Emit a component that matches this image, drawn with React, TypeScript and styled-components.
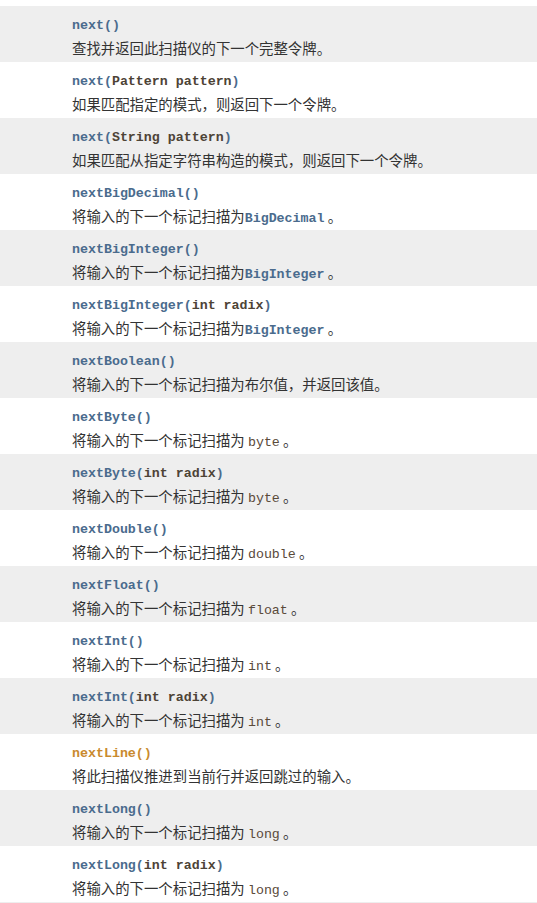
import * as React from 'react';
import styled, { createGlobalStyle } from 'styled-components';

const GlobalStyle = createGlobalStyle`
  html, body { margin: 0; padding: 0; background: #fff; }
`;

interface method {
  name: string,
  params?: string,
  desc: string,
  code?: string,
  link?: boolean,
  tail?: string,
  visited?: boolean,
}

const methods: method[] = [
  { name: 'next', desc: '查找并返回此扫描仪的下一个完整令牌。' },
  { name: 'next', params: 'Pattern pattern', desc: '如果匹配指定的模式，则返回下一个令牌。' },
  { name: 'next', params: 'String pattern', desc: '如果匹配从指定字符串构造的模式，则返回下一个令牌。' },
  { name: 'nextBigDecimal', desc: '将输入的下一个标记扫描为', code: 'BigDecimal', link: true, tail: '。' },
  { name: 'nextBigInteger', desc: '将输入的下一个标记扫描为', code: 'BigInteger', link: true, tail: '。' },
  { name: 'nextBigInteger', params: 'int radix', desc: '将输入的下一个标记扫描为', code: 'BigInteger', link: true, tail: '。' },
  { name: 'nextBoolean', desc: '将输入的下一个标记扫描为布尔值，并返回该值。' },
  { name: 'nextByte', desc: '将输入的下一个标记扫描为 ', code: 'byte', tail: '。' },
  { name: 'nextByte', params: 'int radix', desc: '将输入的下一个标记扫描为 ', code: 'byte', tail: '。' },
  { name: 'nextDouble', desc: '将输入的下一个标记扫描为 ', code: 'double', tail: '。' },
  { name: 'nextFloat', desc: '将输入的下一个标记扫描为 ', code: 'float', tail: '。' },
  { name: 'nextInt', desc: '将输入的下一个标记扫描为 ', code: 'int', tail: '。' },
  { name: 'nextInt', params: 'int radix', desc: '将输入的下一个标记扫描为 ', code: 'int', tail: '。' },
  { name: 'nextLine', desc: '将此扫描仪推进到当前行并返回跳过的输入。', visited: true },
  { name: 'nextLong', desc: '将输入的下一个标记扫描为 ', code: 'long', tail: '。' },
  { name: 'nextLong', params: 'int radix', desc: '将输入的下一个标记扫描为 ', code: 'long', tail: '。' },
];

const Page = styled.div`
  padding-top: 6px;
  width: 537px;
`;

const Table = styled.div`
  border-bottom: 1px solid #eeeeee;
`;

const Row = styled.div<{ $shaded: boolean }>`
  box-sizing: border-box;
  height: 56px;
  padding: 10px 0 2px 72px;
  background: ${p => p.$shaded ? '#eeeeee' : '#ffffff'};
  display: flex;
  flex-direction: column;
`;

const Signature = styled.div`
  font-family: "Liberation Mono", "Courier New", monospace;
  font-weight: bold;
  font-size: 13.3px;
  line-height: 20px;
  white-space: pre;
`;

const Name = styled.span<{ $visited?: boolean }>`
  color: ${p => p.$visited ? '#c98a2e' : '#4a6b8d'};
`;

const Params = styled.span`
  color: #4d4336;
`;

const Desc = styled.div`
  font-family: "Noto Sans CJK SC", "Noto Sans", sans-serif;
  font-size: 14.4px;
  line-height: 24px;
  color: #333333;
  white-space: pre;
`;

const InlineCode = styled.span<{ $link?: boolean }>`
  font-family: "Liberation Mono", "Courier New", monospace;
  font-size: 13.3px;
  font-weight: ${p => p.$link ? 'bold' : 'normal'};
  color: ${p => p.$link ? '#4a6b8d' : '#5a4a3a'};
`;

const App: React.FC = () => {
  return (
    <Page>
      <GlobalStyle />
      <Table>
        {methods.map((m, i) => (
          <Row key={i} $shaded={i % 2 === 0}>
            <Signature>
              <Name $visited={m.visited}>{m.name}(</Name>
              {m.params ? <Params>{m.params}</Params> : null}
              <Name $visited={m.visited}>)</Name>
            </Signature>
            <Desc>
              {m.desc}
              {m.code ? <InlineCode $link={m.link}>{m.code}</InlineCode> : null}
              {m.tail ? ' ' + m.tail : null}
            </Desc>
          </Row>
        ))}
      </Table>
    </Page>
  );
}

export default App;
